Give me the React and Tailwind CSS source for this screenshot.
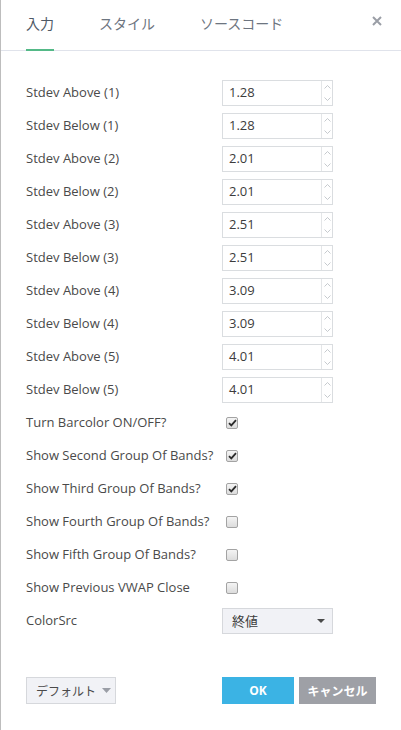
import React from "react";

const inputs = [
  ["Stdev Above (1)", "1.28"],
  ["Stdev Below (1)", "1.28"],
  ["Stdev Above (2)", "2.01"],
  ["Stdev Below (2)", "2.01"],
  ["Stdev Above (3)", "2.51"],
  ["Stdev Below (3)", "2.51"],
  ["Stdev Above (4)", "3.09"],
  ["Stdev Below (4)", "3.09"],
  ["Stdev Above (5)", "4.01"],
  ["Stdev Below (5)", "4.01"],
];

const checks = [
  ["Turn Barcolor ON/OFF?", true],
  ["Show Second Group Of Bands?", true],
  ["Show Third Group Of Bands?", true],
  ["Show Fourth Group Of Bands?", false],
  ["Show Fifth Group Of Bands?", false],
  ["Show Previous VWAP Close", false],
];

function NumInput({ value }) {
  return (
    <div className="flex h-[26px] w-[111px] border border-[#dadde0] bg-white">
      <div className="flex flex-1 items-center pl-[6px] text-[13px] text-[#3c3c3c]">{value}</div>
      <div className="flex w-[11px] flex-col border-l border-[#e4e6e8]">
        <div className="flex flex-1 items-center justify-center">
          <svg width="7" height="4" viewBox="0 0 7 4"><path d="M0.5 3.5 L3.5 0.5 L6.5 3.5" fill="none" stroke="#b8bcc2" strokeWidth="0.8" /></svg>
        </div>
        <div className="flex flex-1 items-center justify-center">
          <svg width="7" height="4" viewBox="0 0 7 4"><path d="M0.5 0.5 L3.5 3.5 L6.5 0.5" fill="none" stroke="#b8bcc2" strokeWidth="0.8" /></svg>
        </div>
      </div>
    </div>
  );
}

function Check({ checked }) {
  return (
    <div className="ml-[4px] flex h-[12px] w-[12px] items-center justify-center rounded-[2px] border border-[#a3a3a3] bg-gradient-to-b from-[#f4f4f4] to-[#dcdcdc]">
      {checked && (
        <svg width="9" height="8" viewBox="0 0 9 8">
          <path d="M1 4.2 L3.3 6.4 L8 1.2" fill="none" stroke="#2b2b2b" strokeWidth="1.8" />
        </svg>
      )}
    </div>
  );
}

export default function App() {
  return (
    <div
      className="flex h-[730px] w-[401px] flex-col border-l border-[#bdbdbd] bg-white"
      style={{ fontFamily: '"Open Sans", "Noto Sans CJK JP", sans-serif' }}
    >
      <div className="relative flex h-[51px] items-stretch border-b border-[#e0e3eb] pl-[25px]">
        <div className="relative flex items-center pb-[3px] text-[14px] text-[#4f5966]" style={{ fontFamily: '"Noto Sans CJK JP", sans-serif' }}>
          入力
          <div className="absolute bottom-[-1px] left-0 right-0 h-[2px] bg-[#53b987]" />
        </div>
        <div className="ml-[45px] flex items-center pb-[3px] text-[14px] text-[#6d7580]" style={{ fontFamily: '"Noto Sans CJK JP", sans-serif' }}>
          スタイル
        </div>
        <div className="ml-[45px] flex items-center pb-[3px] text-[14px] text-[#6d7580]" style={{ fontFamily: '"Noto Sans CJK JP", sans-serif' }}>
          ソースコード
        </div>
        <div className="absolute right-[19px] top-[16px]">
          <svg width="10" height="10" viewBox="0 0 10 10">
            <path d="M1 1 L9 9 M9 1 L1 9" stroke="#9a9ea6" strokeWidth="2" />
          </svg>
        </div>
      </div>

      <div className="flex flex-col px-[25px] pt-[25px]">
        {inputs.map(([label, v]) => (
          <div key={label} className="flex h-[33px] items-center">
            <div className="w-[196px] text-[13px] text-[#4a4a4a]">{label}</div>
            <NumInput value={v} />
          </div>
        ))}
        {checks.map(([label, c]) => (
          <div key={label} className="flex h-[33px] items-center">
            <div className="w-[196px] text-[13px] text-[#4a4a4a]">{label}</div>
            <Check checked={c} />
          </div>
        ))}
        <div className="flex h-[33px] items-center">
          <div className="w-[196px] text-[13px] text-[#4a4a4a]">ColorSrc</div>
          <div className="flex h-[26px] w-[111px] items-center justify-between border border-[#d6d8dc] bg-[#f1f2f6] pl-[9px] pr-[7px]">
            <span className="text-[13px] text-[#3c3c3c]" style={{ fontFamily: '"Noto Sans CJK JP", sans-serif' }}>終値</span>
            <svg width="8" height="4" viewBox="0 0 8 4"><path d="M0 0 L8 0 L4 4 Z" fill="#4a4a4a" /></svg>
          </div>
        </div>
      </div>

      <div className="mt-[40px] flex items-center px-[25px]">
        <div className="flex h-[27px] w-[90px] items-center border border-[#d6d8dc] bg-[#f1f2f6] pl-[9px]">
          <span className="text-[12px] text-[#4a4a4a]" style={{ fontFamily: '"Noto Sans CJK JP", sans-serif' }}>デフォルト</span>
          <svg className="ml-[6px]" width="9" height="5" viewBox="0 0 9 5"><path d="M0 0 L9 0 L4.5 5 Z" fill="#9a9ea6" /></svg>
        </div>
        <div className="ml-[106px] flex h-[27px] w-[72px] items-center justify-center bg-[#3bb3e4] text-[12px] font-bold text-white">
          OK
        </div>
        <div className="ml-[5px] flex h-[27px] w-[77px] items-center justify-center bg-[#9ea0a6] text-[12px] font-bold text-white" style={{ fontFamily: '"Noto Sans CJK JP", sans-serif' }}>
          キャンセル
        </div>
      </div>
    </div>
  );
}
